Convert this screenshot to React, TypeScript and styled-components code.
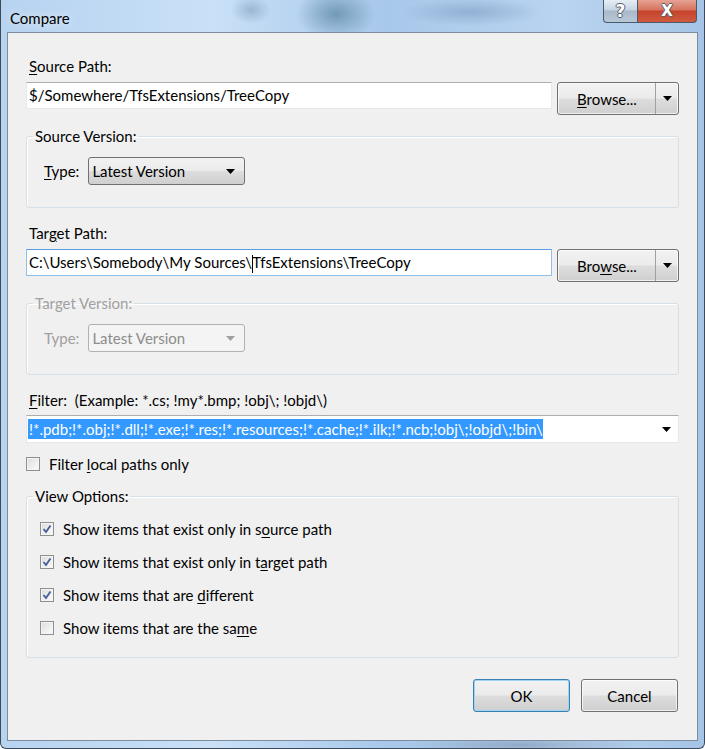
import React from 'react'
import styled, { createGlobalStyle, css } from 'styled-components'

const GlobalStyle = createGlobalStyle`
  html, body {
    margin: 0;
    padding: 0;
    background: #fff;
  }
  body {
    width: 705px;
    height: 749px;
    overflow: hidden;
    font-family: Lato, 'Noto Sans', sans-serif;
    font-size: 15px;
    color: #000;
  }
`

const Frame = styled.div`
  width: 705px;
  height: 749px;
  box-sizing: border-box;
  display: flex;
  flex-direction: column;
  padding: 0 6px 7px 6px;
  border-left: 1px solid #3c4a5a;
  border-right: 1px solid #3c4a5a;
  border-bottom: 1px solid #3c4a5a;
  border-radius: 0 0 6px 6px;
  background:
    radial-gradient(ellipse 40px 26px at 335px 14px, rgba(60, 110, 140, 0.55), transparent),
    radial-gradient(ellipse 70px 14px at 470px 12px, rgba(110, 140, 180, 0.45), transparent),
    radial-gradient(ellipse 20px 14px at 250px 10px, rgba(110, 140, 170, 0.45), transparent),
    radial-gradient(ellipse 120px 10px at 520px 745px, rgba(90, 110, 140, 0.4), transparent),
    linear-gradient(90deg, #b7d3f0 0%, #c9e0f7 30%, #a8c8ea 55%, #b9d4f0 80%, #a5c4e6 100%);
`

const TitleBar = styled.div`
  height: 32px;
  display: flex;
  align-items: flex-start;
  justify-content: space-between;
`

const Title = styled.div`
  padding: 8px 0 0 3px;
  font-size: 15px;
  line-height: 20px;
  color: #000;
  text-shadow: 0 0 8px rgba(255, 255, 255, 0.9);
`

const CaptionButtons = styled.div`
  display: flex;
  margin-right: 1px;
`

const CaptionButton = styled.div<{ $close?: boolean }>`
  height: 23px;
  box-sizing: border-box;
  display: flex;
  align-items: center;
  justify-content: center;
  border: 1px solid #4b5a6b;
  border-top: none;
  color: #fff;
  font-family: 'DejaVu Sans', sans-serif;
  font-weight: bold;
  ${(p) =>
    p.$close
      ? css`
          width: 59px;
          border-radius: 0 0 4px 0;
          border-left: none;
          background: linear-gradient(#e7a293 0%, #d6735f 45%, #c6432b 50%, #cf5a3e 100%);
          font-size: 15px;
        `
      : css`
          width: 35px;
          border-radius: 0 0 0 4px;
          background: linear-gradient(#e6eef6 0%, #c6d4e2 45%, #a9b9cb 50%, #b8c8d8 100%);
          font-size: 17px;
        `}
  text-shadow: -1px 0 #55606c, 1px 0 #55606c, 0 -1px #55606c, 0 1px #55606c;
`

const Client = styled.div`
  flex: 1;
  display: flex;
  flex-direction: column;
  background: #f0f0f0;
  border: 1px solid #7d8c9c;
  padding: 23px 18px 0 18px;
`

const Label = styled.div<{ $disabled?: boolean; $gap?: number }>`
  line-height: 20px;
  height: 20px;
  padding-left: 3px;
  white-space: pre;
  margin-bottom: ${(p) => p.$gap ?? 6}px;
  color: ${(p) => (p.$disabled ? '#a0a0a0' : '#000')};
`

const Key = styled.span`
  text-decoration: underline;
  text-underline-offset: 2px;
`

const PathRow = styled.div`
  display: flex;
  gap: 5px;
  align-items: flex-start;
  height: 33px;
`

const TextBox = styled.div<{ $focused?: boolean }>`
  flex: 1;
  height: 27px;
  box-sizing: border-box;
  background: #fff;
  border: 1px solid ${(p) => (p.$focused ? '#8fbfe8' : '#e3e9ef')};
  border-top-color: ${(p) => (p.$focused ? '#569de5' : '#abadb3')};
  border-radius: 1px;
  padding-left: 2px;
  line-height: 25px;
  white-space: pre;
`

const Caret = styled.span`
  display: inline-block;
  width: 1px;
  height: 18px;
  background: #000;
  vertical-align: middle;
  margin: 0 -1px 0 0;
`

const buttonFace = css`
  box-sizing: border-box;
  border: 1px solid #707070;
  border-radius: 3px;
  background: linear-gradient(#f2f2f2 0%, #ebebeb 48%, #dddddd 52%, #cfcfcf 100%);
  box-shadow: inset 0 0 0 1px rgba(255, 255, 255, 0.7);
`

const SplitButton = styled.div`
  ${buttonFace};
  width: 122px;
  height: 33px;
  display: flex;
`

const SplitMain = styled.div`
  flex: 1;
  display: flex;
  align-items: center;
  justify-content: center;
  border-right: 1px solid #a0a0a0;
  padding-left: 1px;
`

const SplitArrow = styled.div`
  width: 22px;
  display: flex;
  align-items: center;
  justify-content: center;
`

const Arrow = ({ color = '#000' }: { color?: string }) => (
  <svg width="9" height="5" viewBox="0 0 9 5">
    <path d="M0 0 H9 L4.5 5 Z" fill={color} />
  </svg>
)

const Group = styled.fieldset<{ $disabled?: boolean }>`
  margin: 0;
  padding: 0;
  min-width: 0;
  border: 1px solid #d5dfe5;
  border-radius: 3px;
  box-shadow: inset 1px 1px 0 #fff;
  color: ${(p) => (p.$disabled ? '#a0a0a0' : '#000')};
`

const Legend = styled.legend`
  margin-left: 6px;
  padding: 0 2px;
  line-height: 20px;
  height: 20px;
`

const GroupBody = styled.div<{ $pad: string }>`
  padding: ${(p) => p.$pad};
  display: flex;
  flex-direction: column;
  gap: 13px;
`

const TypeRow = styled.div`
  display: flex;
  align-items: center;
  gap: 9px;
`

const DropDown = styled.div<{ $disabled?: boolean }>`
  width: 157px;
  height: 28px;
  box-sizing: border-box;
  display: flex;
  align-items: center;
  justify-content: space-between;
  padding: 0 9px 0 3px;
  border-radius: 3px;
  ${(p) =>
    p.$disabled
      ? css`
          border: 1px solid #adb2b5;
          background: #f4f4f4;
          color: #8d8d8d;
        `
      : css`
          border: 1px solid #707070;
          background: linear-gradient(#f2f2f2 0%, #ebebeb 48%, #dddddd 52%, #cfcfcf 100%);
          color: #000;
        `}
`

const ComboBox = styled.div`
  height: 28px;
  box-sizing: border-box;
  display: flex;
  align-items: center;
  justify-content: space-between;
  background: #fff;
  border: 1px solid #e3e9ef;
  border-top-color: #abadb3;
  padding: 0 7px 0 1px;
`

const Selection = styled.span`
  background: #3399ff;
  color: #fff;
  line-height: 20px;
  padding-left: 1px;
  white-space: pre;
`

const CheckRow = styled.div`
  display: flex;
  align-items: center;
  gap: 9px;
  height: 20px;
`

const Box = styled.span`
  width: 14px;
  height: 14px;
  box-sizing: border-box;
  border: 1px solid #8e8f8f;
  background: linear-gradient(135deg, #dcdcdc 0%, #f0f0f0 60%, #fbfbfb 100%);
  box-shadow: inset 0 0 0 1px #f4f4f4;
  display: flex;
  align-items: center;
  justify-content: center;
`

const CheckBox = ({ checked, label }: { checked?: boolean; label: React.ReactNode }) => (
  <CheckRow>
    <Box>
      {checked && (
        <svg width="10" height="10" viewBox="0 0 10 10">
          <path d="M1.5 5 L4 8 L8.5 1.5" fill="none" stroke="#4a5f97" strokeWidth="1.9" />
        </svg>
      )}
    </Box>
    <span>{label}</span>
  </CheckRow>
)

const Footer = styled.div`
  display: flex;
  justify-content: flex-end;
  gap: 11px;
  margin-top: 21px;
  padding-right: 1px;
`

const DialogButton = styled.div<{ $default?: boolean }>`
  ${buttonFace};
  width: 97px;
  height: 33px;
  display: flex;
  align-items: center;
  justify-content: center;
  ${(p) =>
    p.$default &&
    css`
      border-color: #3c7fb1;
      box-shadow: inset 0 0 0 1px #9fd5f4;
    `}
`

const App: React.FC = () => {
  return (
    <>
      <GlobalStyle />
      <Frame>
        <TitleBar>
          <Title>Compare</Title>
          <CaptionButtons>
            <CaptionButton>?</CaptionButton>
            <CaptionButton $close>X</CaptionButton>
          </CaptionButtons>
        </TitleBar>
        <Client>
          <Label>
            <Key>S</Key>ource Path:
          </Label>
          <PathRow>
            <TextBox>$/Somewhere/TfsExtensions/TreeCopy</TextBox>
            <SplitButton>
              <SplitMain>
                <span>
                  <Key>B</Key>rowse...
                </span>
              </SplitMain>
              <SplitArrow>
                <Arrow />
              </SplitArrow>
            </SplitButton>
          </PathRow>

          <Group style={{ marginTop: 11 }}>
            <Legend>Source Version:</Legend>
            <GroupBody $pad="11px 0 22px 17px">
              <TypeRow>
                <span>
                  <Key>T</Key>ype:
                </span>
                <DropDown>
                  <span>Latest Version</span>
                  <Arrow />
                </DropDown>
              </TypeRow>
            </GroupBody>
          </Group>

          <Label style={{ marginTop: 15 }}>
            Tar<Key>g</Key>et Path:
          </Label>
          <PathRow>
            <TextBox $focused>
              C:\Users\Somebody\My Sources\<Caret />TfsExtensions\TreeCopy
            </TextBox>
            <SplitButton>
              <SplitMain>
                <span>
                  Bro<Key>w</Key>se...
                </span>
              </SplitMain>
              <SplitArrow>
                <Arrow />
              </SplitArrow>
            </SplitButton>
          </PathRow>

          <Group $disabled style={{ marginTop: 11 }}>
            <Legend>Target Version:</Legend>
            <GroupBody $pad="11px 0 22px 17px">
              <TypeRow>
                <span>Type:</span>
                <DropDown $disabled>
                  <span>Latest Version</span>
                  <Arrow color="#a0a0a0" />
                </DropDown>
              </TypeRow>
            </GroupBody>
          </Group>

          <Label style={{ marginTop: 15 }} $gap={5}>
            <Key>F</Key>ilter:  (Example: *.cs; !my*.bmp; !obj\; !objd\)
          </Label>
          <ComboBox>
            <Selection>
              !*.pdb;!*.obj;!*.dll;!*.exe;!*.res;!*.resources;!*.cache;!*.ilk;!*.ncb;!obj\;!objd\;!bin\
            </Selection>
            <Arrow />
          </ComboBox>

          <div style={{ marginTop: 11 }}>
            <CheckBox
              label={
                <>
                  Filter <Key>l</Key>ocal paths only
                </>
              }
            />
          </div>

          <Group style={{ marginTop: 12 }}>
            <Legend>View Options:</Legend>
            <GroupBody $pad="13px 0 19px 13px">
              <CheckBox
                checked
                label={
                  <>
                    Show items that exist only in s<Key>o</Key>urce path
                  </>
                }
              />
              <CheckBox
                checked
                label={
                  <>
                    Show items that exist only in t<Key>a</Key>rget path
                  </>
                }
              />
              <CheckBox
                checked
                label={
                  <>
                    Show items that are <Key>d</Key>ifferent
                  </>
                }
              />
              <CheckBox
                label={
                  <>
                    Show items that are the sa<Key>m</Key>e
                  </>
                }
              />
            </GroupBody>
          </Group>

          <Footer>
            <DialogButton $default>OK</DialogButton>
            <DialogButton>Cancel</DialogButton>
          </Footer>
        </Client>
      </Frame>
    </>
  )
}

export default App
